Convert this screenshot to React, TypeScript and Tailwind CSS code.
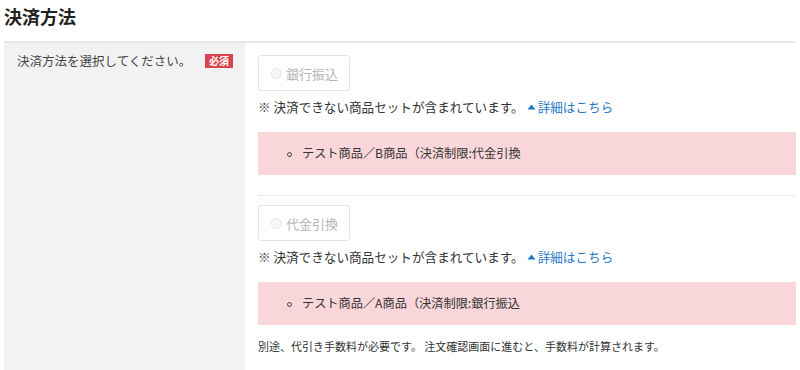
import React from "react";

const FONT = { fontFamily: '"Noto Sans CJK JP", "Noto Sans", sans-serif' };

function Radio({ label }: { label: string }) {
  return (
    <div className="w-[92px] h-[36px] border border-[#e3e3e3] rounded-[3px] flex items-center pl-[12px] gap-[4px]">
      <span className="w-[11px] h-[11px] rounded-full border border-[#e6e6e6] bg-[#f7f7f7]" />
      <span className="text-[13px] text-[#b5b5b5] leading-none">{label}</span>
    </div>
  );
}

function Notice() {
  return (
    <div className="h-[18px] mt-[7px] flex items-center text-[12.6px] text-[#333] leading-none">
      <span>※ 決済できない商品セットが含まれています。</span>
      <span className="ml-[3px] flex items-center text-[#1f78c8]">
        <svg width="9" height="6" viewBox="0 0 9 6" className="mr-[2px]">
          <path d="M4.5 0.5 L8.5 5.5 L0.5 5.5 Z" fill="#1f78c8" />
        </svg>
        詳細はこちら
      </span>
    </div>
  );
}

function Restricted({ text }: { text: string }) {
  return (
    <div className="h-[43px] bg-[#f9d6da] flex items-center pl-[29px] text-[12.2px] text-[#333] leading-none">
      <span className="w-[5px] h-[5px] rounded-full border border-[#444] mr-[10px] mt-[1px]" />
      <span>{text}</span>
    </div>
  );
}

export default function App() {
  return (
    <div className="w-[800px] h-[370px] overflow-hidden bg-white px-[4px]" style={FONT}>
      <div className="h-[43px] border-b-2 border-[#e8e8e8] pt-[2px]">
        <h1 className="text-[18px] font-bold text-[#222] leading-[28px]">決済方法</h1>
      </div>
      <div className="flex h-[327px]">
        <div className="w-[241px] bg-[#f2f2f2] flex items-start justify-between pl-[13px] pr-[12px] pt-[11px]">
          <span className="text-[12.5px] text-[#444] leading-[14px]">決済方法を選択してください。</span>
          <span className="bg-[#d9434e] text-white text-[10px] font-bold px-[4px] h-[14px] flex items-center leading-none">必須</span>
        </div>
        <div className="flex-1 pl-[13px] pt-[12px]">
          <Radio label="銀行振込" />
          <Notice />
          <div className="mt-[16px]">
            <Restricted text="テスト商品／B商品（決済制限:代金引換" />
          </div>
          <div className="mt-[20px] border-t border-dotted border-[#d8d8d8]" />
          <div className="mt-[9px]">
            <Radio label="代金引換" />
          </div>
          <Notice />
          <div className="mt-[16px]">
            <Restricted text="テスト商品／A商品（決済制限:銀行振込" />
          </div>
          <p className="mt-[16px] text-[11px] text-[#333] leading-none">
            別途、代引き手数料が必要です。 注文確認画面に進むと、手数料が計算されます。
          </p>
        </div>
      </div>
    </div>
  );
}
